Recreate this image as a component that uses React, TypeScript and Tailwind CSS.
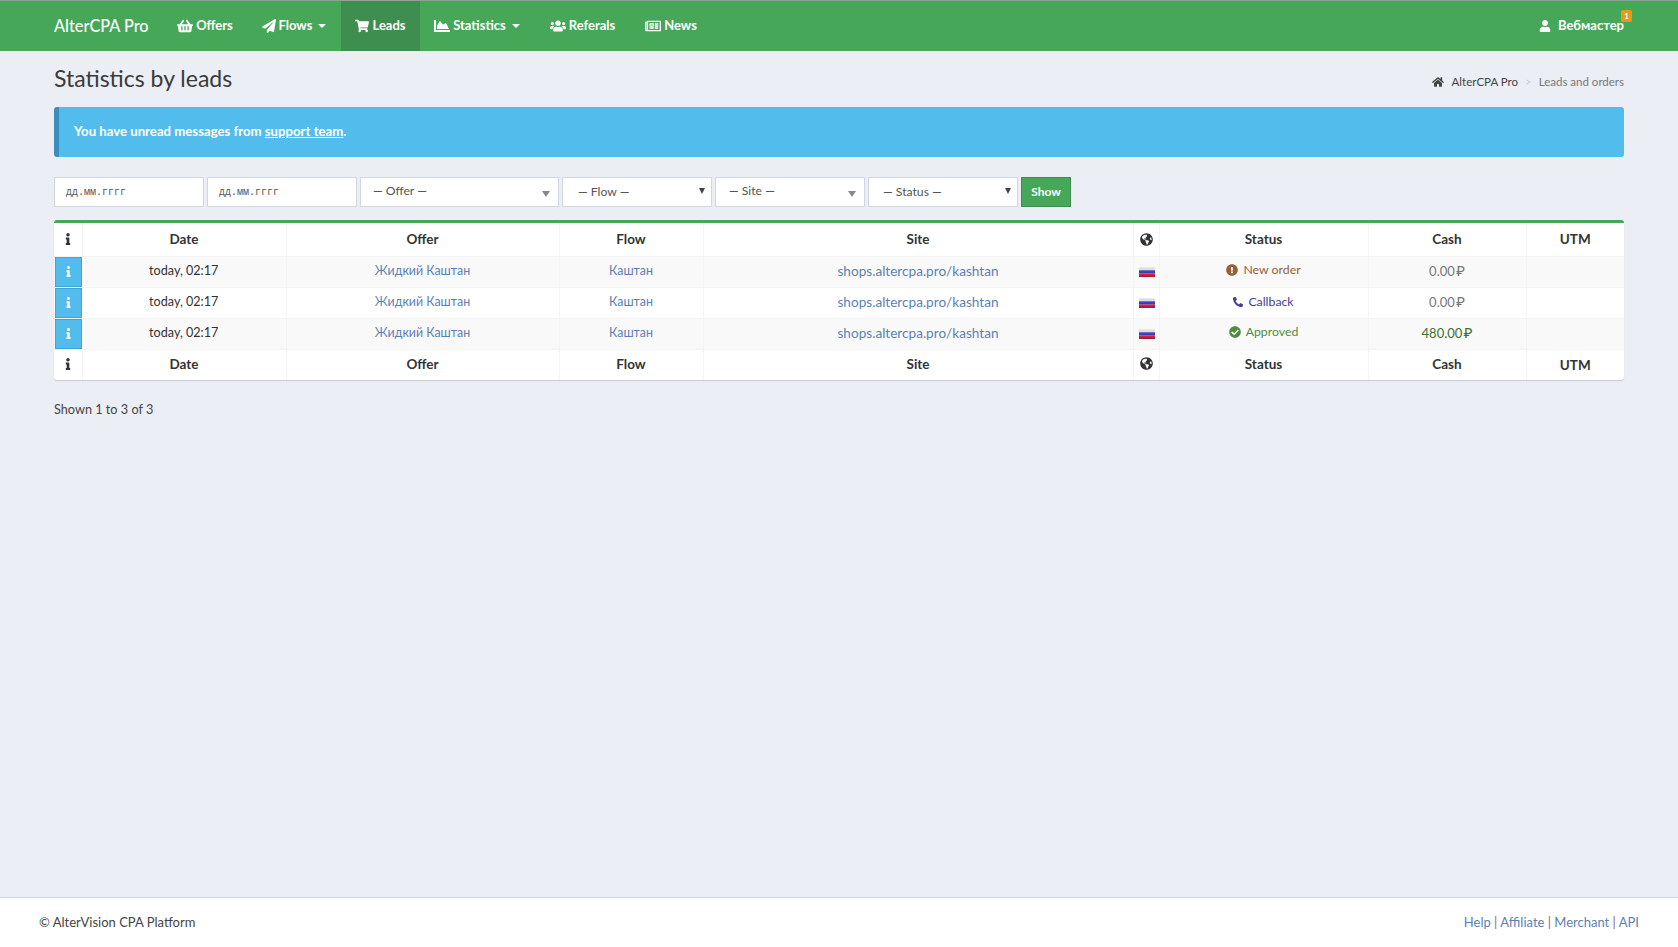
import React from 'react';
import {
    FaShoppingBasket, FaPaperPlane, FaShoppingCart, FaChartArea, FaUsers, FaRegNewspaper,
    FaUser, FaHome, FaInfo, FaGlobeAmericas, FaExclamationCircle, FaPhone, FaCheckCircle,
} from 'react-icons/fa';

const font = "font-['Lato','Noto_Sans',sans-serif]";

const Caret = () => <span className="ml-[6px] inline-block border-x-[4px] border-t-[4px] border-x-transparent border-t-white" />;

const NavItem = ({ icon, label, caret, active, width }: { icon: React.ReactNode; label: string; caret?: boolean; active?: boolean; width: string }) => (
    <a className={`flex h-full shrink-0 items-center justify-center text-[13px] font-bold text-white ${width} ${active ? 'bg-[#3e8e4f]' : ''}`} href="#">
        <span className="mr-[3px] flex text-[16px]">{icon}</span>
        {label}
        {caret && <Caret />}
    </a>
);

const Flag = () => (
    <svg width="16" height="10" viewBox="0 0 16 10" className="mx-auto block translate-x-[1px]">
        <defs>
            <linearGradient id="flagShade" x1="0" y1="0" x2="0" y2="1">
                <stop offset="0" stopColor="#fff" stopOpacity="0.25" />
                <stop offset="0.7" stopColor="#000" stopOpacity="0" />
                <stop offset="1" stopColor="#000" stopOpacity="0.3" />
            </linearGradient>
        </defs>
        <rect width="16" height="3.4" y="0" fill="#e4e4ee" />
        <rect width="16" height="3.3" y="3.3" fill="#3c3cc0" />
        <rect width="16" height="3.4" y="6.6" fill="#dc2440" />
        <rect width="16" height="10" fill="url(#flagShade)" />
    </svg>
);

const Select = ({ label, width, pad, arrow, textClass }: { label: string; width: string; pad: string; arrow: 'gray' | 'dark'; textClass: string }) => (
    <div className={`relative flex h-[30px] items-center border border-[#d2d6de] bg-white text-[12.2px] text-[#555] ${width} ${pad}`}>
        <span className={textClass}>{label}</span>
        {arrow === 'gray'
            ? <span className="absolute right-[8px] top-[13px] border-x-[4px] border-t-[6px] border-x-transparent border-t-[#888]" />
            : <span className="absolute right-[6px] top-[10px] border-x-[3.5px] border-t-[6px] border-x-transparent border-t-[#444]" />}
    </div>
);

const DateInput = () => (
    <div className="flex h-[30px] w-[150px] items-center border border-[#d2d6de] bg-white pl-[11px] font-['Liberation_Mono',monospace] text-[10px] text-[#555]">дд.мм.гггг</div>
);

const headCell = 'border-r border-[#f4f4f4] text-center text-[13.5px] font-bold text-[#333]';

const HeadRow = ({ foot }: { foot?: boolean }) => {
    const c = foot ? `${headCell} pb-[2px]` : headCell;
    return (
        <tr className={foot ? 'h-[31px]' : 'h-[33px]'}>
            <th className={c}><FaInfo className="mx-auto text-[12px] text-[#333]" /></th>
            <th className={c}>Date</th>
            <th className={c}>Offer</th>
            <th className={c}>Flow</th>
            <th className={c}>Site</th>
            <th className={c}><FaGlobeAmericas className="mx-auto text-[13px] text-[#333]" /></th>
            <th className={c}>Status</th>
            <th className={c}>Cash</th>
            <th className="text-center text-[13.5px] font-bold text-[#333]">UTM</th>
        </tr>
    );
};

const rows = [
    {
        status: 'New order', color: 'text-[#94603a]', icon: <FaExclamationCircle className="text-[12px]" />,
        cash: '0.00', cashColor: 'text-[#777]', bg: 'bg-[#f9f9f9]',
    },
    {
        status: 'Callback', color: 'text-[#44408f]', icon: <FaPhone className="-scale-x-100 text-[10px]" />,
        cash: '0.00', cashColor: 'text-[#777]', bg: 'bg-white',
    },
    {
        status: 'Approved', color: 'text-[#4f8c3f]', icon: <FaCheckCircle className="text-[12px]" />,
        cash: '480.00', cashColor: 'text-[#3f7030]', bg: 'bg-[#f9f9f9]',
    },
];

const cell = 'border-r border-t border-[#f4f4f4] text-center';
const link = 'text-[#5d7fb5]';

const App = () => {
    return (
        <div className={`flex min-h-[947px] flex-col bg-[#ebeef5] text-[13px] text-[#333] ${font}`}>
            <nav className="flex h-[51px] items-stretch border-t border-[#8aa58f] bg-[#46a758] pl-[54px] pr-[54px]">
                <a className="flex w-[110px] shrink-0 items-center text-[16.3px] font-medium text-white" href="#">AlterCPA Pro</a>
                <NavItem icon={<FaShoppingBasket />} label="Offers" width="w-[82px]" />
                <span className="w-[2px]" />
                <NavItem icon={<FaPaperPlane className="text-[14px]" />} label="Flows" caret width="w-[92px]" />
                <span className="w-[1px]" />
                <NavItem icon={<FaShoppingCart className="text-[14px]" />} label="Leads" active width="w-[79px]" />
                <NavItem icon={<FaChartArea />} label="Statistics" caret width="w-[114px]" />
                <span className="w-[2px]" />
                <NavItem icon={<FaUsers />} label="Referals" width="w-[93px]" />
                <span className="w-[2px]" />
                <NavItem icon={<FaRegNewspaper />} label="News" width="w-[80px]" />
                <div className="relative ml-auto flex items-center text-[13px] font-bold text-white">
                    <FaUser className="mr-[7px] text-[12px]" />
                    Вебмастер
                    <span className="absolute right-[-8px] top-[9px] flex h-[12px] w-[11px] items-center justify-center rounded-[2px] bg-[#e59b14] text-[8px] font-bold leading-none">1</span>
                </div>
            </nav>

            <main className="flex-1 px-[54px]">
                <div className="flex h-[56px] items-center justify-between">
                    <h1 className="-mt-[2px] text-[23px] leading-none text-[#3a3a3a]">Statistics by leads</h1>
                    <div className="mt-[6px] flex items-center text-[11.5px]">
                        <FaHome className="mr-[8px] text-[12px] text-[#444]" />
                        <span className="text-[#444]">AlterCPA Pro</span>
                        <span className="mx-[7px] text-[#ccc]">&gt;</span>
                        <span className="text-[#777]">Leads and orders</span>
                    </div>
                </div>

                <div className="flex h-[50px] items-center rounded-[3px] border-l-[5px] border-[#3d8dbc] bg-[#52bced] pl-[15px] text-[13.2px] font-bold text-white">
                    You have unread messages from&nbsp;<a className="underline" href="#">support team</a>.
                </div>

                <div className="mt-[20px] flex gap-[3px]">
                    <DateInput />
                    <DateInput />
                    <Select label="— Offer —" width="w-[199px]" pad="pl-[12px]" arrow="gray" textClass="-mt-[1px]" />
                    <Select label="— Flow —" width="w-[150px]" pad="pl-[15px]" arrow="dark" textClass="mt-[1px]" />
                    <Select label="— Site —" width="w-[150px]" pad="pl-[13px]" arrow="gray" textClass="-mt-[1px]" />
                    <Select label="— Status —" width="w-[150px]" pad="pl-[14px]" arrow="dark" textClass="mt-[1px]" />
                    <button className="h-[30px] w-[50px] border border-[#3e8e4f] bg-[#46a758] text-[12px] font-bold text-white">Show</button>
                </div>

                <div className="mt-[13px] overflow-hidden rounded-[3px] border-t-[3px] border-[#46a758] bg-white shadow-[0_1px_1px_rgba(0,0,0,0.15)]">
                    <table className="w-full table-fixed border-collapse">
                        <colgroup>
                            <col className="w-[28px]" />
                            <col className="w-[204px]" />
                            <col className="w-[273px]" />
                            <col className="w-[144px]" />
                            <col className="w-[430px]" />
                            <col className="w-[26px]" />
                            <col className="w-[209px]" />
                            <col className="w-[158px]" />
                            <col />
                        </colgroup>
                        <thead><HeadRow /></thead>
                        <tbody>
                            {rows.map((r) => (
                                <tr key={r.status} className={`h-[31px] ${r.bg}`}>
                                    <td className="border-t border-[#f4f4f4] p-0 pl-[1px] align-middle">
                                        <span className="flex h-[30px] w-[27px] items-center justify-center border border-[#3fa3d6] bg-[#52bced] text-white">
                                            <FaInfo className="text-[11px]" />
                                        </span>
                                    </td>
                                    <td className={`${cell} text-[12.6px]`}>today, 02:17</td>
                                    <td className={`${cell} ${link} text-[12.4px]`}>Жидкий Каштан</td>
                                    <td className={`${cell} ${link} text-[12.4px]`}>Каштан</td>
                                    <td className={`${cell} ${link} text-[13.6px]`}>shops.altercpa.pro/kashtan</td>
                                    <td className={cell}><Flag /></td>
                                    <td className={`${cell} ${r.color} text-[12.3px]`}>
                                        <span className="inline-flex items-center gap-[5px]">{r.icon}{r.status}</span>
                                    </td>
                                    <td className={`${cell} ${r.cashColor} text-[13px]`}>{r.cash} <span className="-ml-[2px] text-[15px] leading-none">₽</span></td>
                                    <td className="border-t border-[#f4f4f4]" />
                                </tr>
                            ))}
                        </tbody>
                        <tfoot className="border-t border-[#f4f4f4]"><HeadRow foot /></tfoot>
                    </table>
                </div>

                <p className="mt-[20px] text-[12.7px] text-[#444]">Shown 1 to 3 of 3</p>
            </main>

            <footer className="flex h-[50px] items-center justify-between border-t border-[#d2d6de] bg-white pl-[39px] pr-[39px] text-[13px] text-[#444]">
                <span>© AlterVision CPA Platform</span>
                <span className="text-[#8a6a6a]">
                    <a className={link} href="#">Help</a> | <a className={link} href="#">Affiliate</a> | <a className={link} href="#">Merchant</a> | <a className={link} href="#">API</a>
                </span>
            </footer>
        </div>
    );
};

export default App;
